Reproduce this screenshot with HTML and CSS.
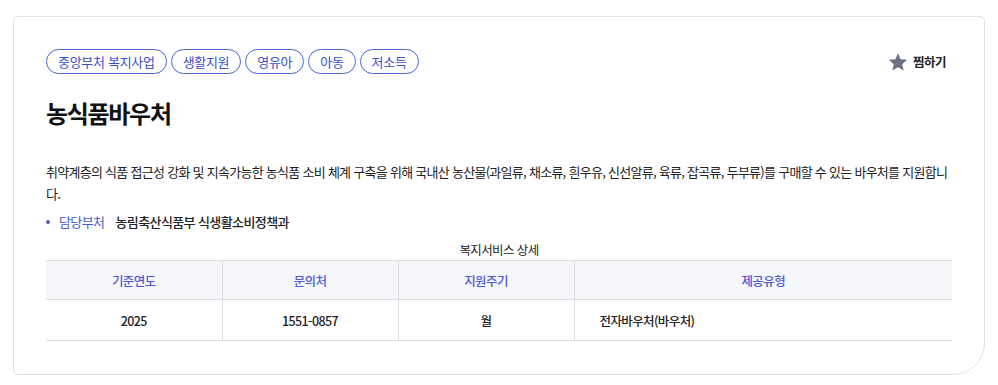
FILE: index.html
```html
<!DOCTYPE html>
<html lang="ko">
<head>
    <meta charset="UTF-8">
    <title>농식품바우처</title>
    <link rel="stylesheet" href="styles.css">
</head>
<body>
<div class="page">
    <div class="card">
        <div class="card_top">
            <ul class="tags">
                <li>중앙부처 복지사업</li>
                <li>생활지원</li>
                <li>영유아</li>
                <li>아동</li>
                <li>저소득</li>
            </ul>
            <a href="" class="fav">
                <svg width="20" height="20" viewBox="0 0 24 24"><path d="M12 1.5l3.1 7.3 7.9.6-6 5.2 1.9 7.7L12 18.2l-6.9 4.1 1.9-7.7-6-5.2 7.9-.6z" fill="#6c7082"/></svg>
                <span>찜하기</span>
            </a>
        </div>
        <h1 class="title">농식품바우처</h1>
        <p class="desc">취약계층의 식품 접근성 강화 및 지속가능한 농식품 소비 체계 구축을 위해 국내산 농산물(과일류, 채소류, 흰우유, 신선알류, 육류, 잡곡류, 두부류)를 구매할 수 있는 바우처를 지원합니다.</p>
        <dl class="info">
            <dt>담당부처</dt>
            <dd>농림축산식품부 식생활소비정책과</dd>
        </dl>
        <table class="detail">
            <caption>복지서비스 상세</caption>
            <colgroup>
                <col class="c1"><col class="c2"><col class="c3"><col class="c4">
            </colgroup>
            <thead>
                <tr><th>기준연도</th><th>문의처</th><th>지원주기</th><th>제공유형</th></tr>
            </thead>
            <tbody>
                <tr><td>2025</td><td>1551-0857</td><td>월</td><td class="left">전자바우처(바우처)</td></tr>
            </tbody>
        </table>
    </div>
</div>
</body>
</html>
```

FILE: styles.css
```css
*{
    margin: 0;
    padding: 0;
    list-style: none;
    box-sizing: border-box;
}
body{
    font-family: "Noto Sans CJK KR", "Noto Sans", sans-serif;
    color: #222222;
    background: #ffffff;
}
.page{
    padding: 16px 13px;
}
.card{
    border: 1px solid #e1e1e1;
    border-radius: 5px 5px 32px 5px;
    padding: 32px 32px 33px 32px;
}
.card_top{
    display: flex;
    justify-content: space-between;
    align-items: center;
}
.tags{
    display: flex;
    gap: 4px;
}
.tags li{
    height: 25px;
    line-height: 23px;
    padding: 0 11px;
    border: 1px solid #4767d3;
    border-radius: 13px;
    font-size: 13px;
    letter-spacing: -0.3px;
    color: #3a4fc6;
}
.fav{
    display: flex;
    align-items: center;
    gap: 5px;
    text-decoration: none;
    color: #222222;
    font-size: 12.5px;
    font-weight: bold;
    letter-spacing: -0.5px;
    margin-right: 6px;
}
.title{
    margin-top: 24px;
    font-size: 24px;
    line-height: 30px;
    letter-spacing: -1.3px;
    font-weight: bold;
    color: #111111;
}
.desc{
    margin-top: 33px;
    font-size: 13px;
    line-height: 22px;
    letter-spacing: -0.72px;
}
.info{
    display: flex;
    align-items: center;
    margin-top: 6px;
    font-size: 13px;
    line-height: 22px;
    letter-spacing: -0.6px;
}
.info dt{
    position: relative;
    padding-left: 13px;
    color: #4a5bd2;
}
.info dt:before{
    content: "";
    position: absolute;
    left: 0;
    top: 9px;
    width: 4px;
    height: 4px;
    border-radius: 50%;
    background: #4a5bd2;
}
.info dd{
    margin-left: 11px;
    font-weight: 500;
}
.detail{
    width: 100%;
    margin-top: 8px;
    border-collapse: collapse;
    table-layout: fixed;
    font-size: 12.5px;
    letter-spacing: -0.6px;
}
.detail caption{
    font-size: 12.5px;
    line-height: 18px;
    padding-bottom: 1px;
    color: #222222;
}
.detail .c1, .detail .c2, .detail .c3{
    width: 176px;
}
.detail thead tr{
    border-top: 1px solid #dcdde2;
}
.detail th{
    height: 39px;
    background: #f5f6fa;
    color: #5059d6;
    font-weight: 500;
    border-bottom: 1px solid #dcdde2;
}
.detail td{
    height: 41px;
    text-align: center;
    font-weight: 500;
    border-bottom: 1px solid #dcdde2;
}
.detail th + th, .detail td + td{
    border-left: 1px solid #dcdde2;
}
.detail td.left{
    text-align: left;
    padding-left: 25px;
}
```
